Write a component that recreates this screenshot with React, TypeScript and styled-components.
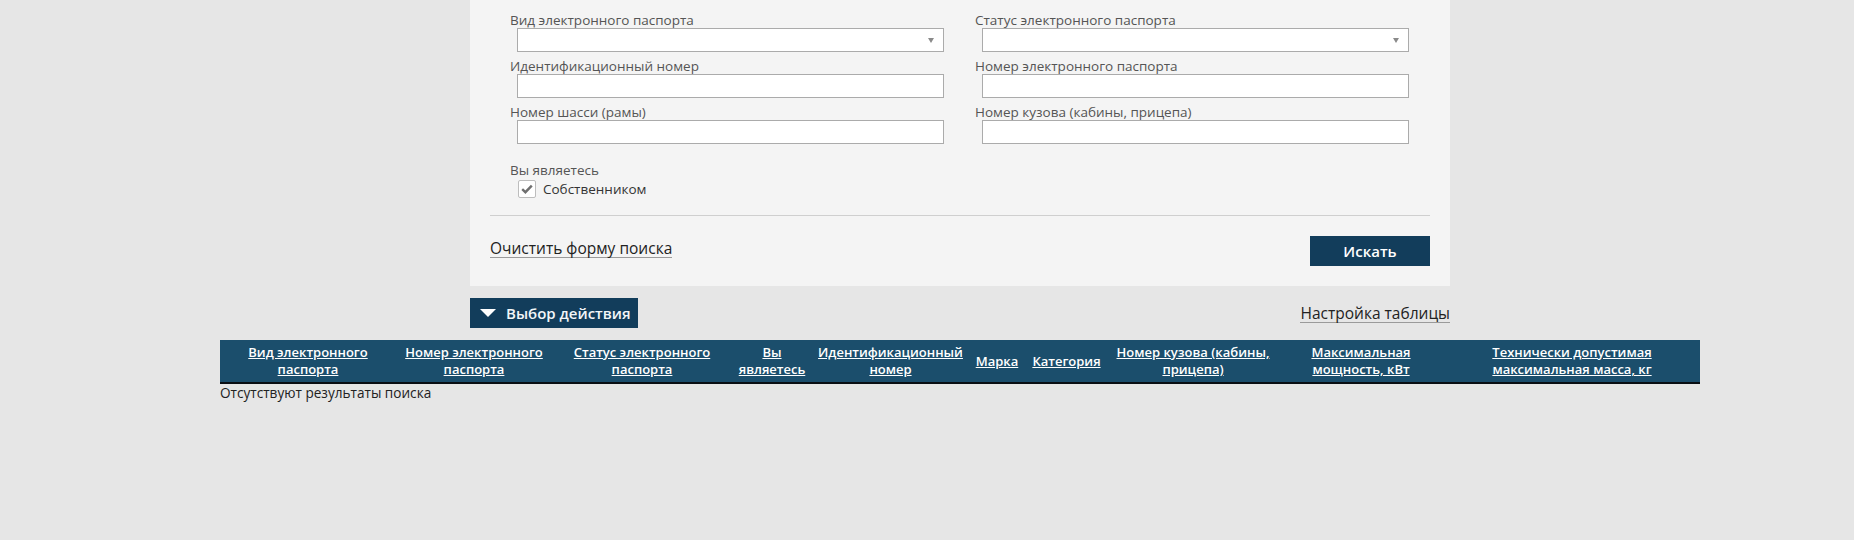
import * as React from "react";
import styled, { createGlobalStyle } from "styled-components";

const GlobalStyle = createGlobalStyle`
  body {
    margin: 0;
    background: #e6e6e6;
    font-family: "Open Sans", "Noto Sans", sans-serif;
  }
`;

const Page = styled.div`
  width: 1480px;
  margin-left: 220px;
`;

const SearchPanel = styled.div`
  width: 980px;
  margin: 0 auto;
  box-sizing: border-box;
  background: #f4f4f4;
  padding: 12px 20px 20px;
`;

const FieldGrid = styled.div`
  display: grid;
  grid-template-columns: 465px 1fr;
  row-gap: 6px;
  padding-left: 20px;
`;

const Field = styled.div`
  display: flex;
  flex-direction: column;
`;

const Label = styled.div`
  font-size: 13.5px;
  line-height: 16px;
  color: #555;
`;

const InputBox = styled.div`
  position: relative;
  width: 427px;
  height: 24px;
  margin-left: 7px;
  box-sizing: border-box;
  border: 1px solid #ababab;
  background: #fff;
`;

const SelectArrow = styled.span`
  position: absolute;
  right: 9px;
  top: 9px;
  width: 0;
  height: 0;
  border-left: 3px solid transparent;
  border-right: 3px solid transparent;
  border-top: 5px solid #8a8a8a;
`;

const OwnerBlock = styled.div`
  padding: 18px 0 0 20px;
`;

const CheckRow = styled.label`
  display: flex;
  align-items: center;
  gap: 7px;
  margin: 2px 0 0 8px;
  font-size: 13.5px;
  color: #333;
`;

const CheckBox = styled.span`
  width: 18px;
  height: 18px;
  box-sizing: border-box;
  border: 1px solid #bdbdbd;
  border-radius: 2px;
  background: #fff;
  display: flex;
  align-items: center;
  justify-content: center;
`;

const Divider = styled.div`
  height: 1px;
  background: #cfcfcf;
  margin-top: 17px;
`;

const FooterRow = styled.div`
  display: flex;
  justify-content: space-between;
  align-items: flex-start;
  margin-top: 20px;
`;

const TextLink = styled.a<{ $offset?: number }>`
  margin-top: ${(p) => p.$offset ?? 0}px;
  font-size: 15.5px;
  line-height: 18px;
  color: #222;
  text-decoration: none;
  border-bottom: 1px solid #9a9a9a;
  cursor: pointer;
`;

const PrimaryButton = styled.button`
  width: 120px;
  height: 30px;
  border: none;
  background: #123d5b;
  color: #fff;
  font-family: inherit;
  font-size: 15px;
  font-weight: 600;
  cursor: pointer;
`;

const Toolbar = styled.div`
  width: 980px;
  margin: 12px auto 0;
  display: flex;
  justify-content: space-between;
  align-items: center;
`;

const ActionButton = styled.button`
  display: flex;
  align-items: center;
  gap: 10px;
  height: 30px;
  width: 168px;
  padding: 0 0 0 10px;
  border: none;
  background: #123d5b;
  color: #f2f6f8;
  font-family: inherit;
  font-size: 15px;
  font-weight: 600;
  cursor: pointer;
`;

const Triangle = styled.span`
  width: 0;
  height: 0;
  border-left: 8px solid transparent;
  border-right: 8px solid transparent;
  border-top: 8px solid #fff;
`;

const ResultTable = styled.table`
  width: 1480px;
  margin-top: 12px;
  border-collapse: collapse;
  table-layout: fixed;
`;

const HeadCell = styled.th<{ $w: number }>`
  width: ${(p) => p.$w}px;
  background: #1b4e6c;
  border-bottom: 2px solid #0a0f14;
  padding: 4px 5px;
  height: 43px;
  box-sizing: border-box;
  color: #fff;
  font-size: 13px;
  font-weight: 600;
  line-height: 17px;
  text-align: center;
  vertical-align: middle;

  a {
    color: #fff;
    text-decoration: underline;
  }
`;

const EmptyText = styled.div`
  font-size: 13.6px;
  line-height: 18px;
  color: #222;
`;

const columns: { title: string; w: number }[] = [
  { title: "Вид электронного паспорта", w: 176 },
  { title: "Номер электронного паспорта", w: 156 },
  { title: "Статус электронного паспорта", w: 180 },
  { title: "Вы являетесь", w: 80 },
  { title: "Идентификационный номер", w: 157 },
  { title: "Марка", w: 56 },
  { title: "Категория", w: 83 },
  { title: "Номер кузова (кабины, прицепа)", w: 170 },
  { title: "Максимальная мощность, кВт", w: 166 },
  { title: "Технически допустимая максимальная масса, кг", w: 256 },
];

const fields: { label: string; select?: boolean }[] = [
  { label: "Вид электронного паспорта", select: true },
  { label: "Статус электронного паспорта", select: true },
  { label: "Идентификационный номер" },
  { label: "Номер электронного паспорта" },
  { label: "Номер шасси (рамы)" },
  { label: "Номер кузова (кабины, прицепа)" },
];

const App: React.FC = () => {
  return (
    <>
      <GlobalStyle />
      <Page>
        <SearchPanel>
          <FieldGrid>
            {fields.map((f) => (
              <Field key={f.label}>
                <Label>{f.label}</Label>
                <InputBox>{f.select && <SelectArrow />}</InputBox>
              </Field>
            ))}
          </FieldGrid>

          <OwnerBlock>
            <Label>Вы являетесь</Label>
            <CheckRow>
              <CheckBox>
                <svg width="12" height="10" viewBox="0 0 12 10">
                  <path
                    d="M1.2 5.2 L4.4 8.2 L10.8 1.6"
                    fill="none"
                    stroke="#6f6f6f"
                    strokeWidth="2.4"
                  />
                </svg>
              </CheckBox>
              Собственником
            </CheckRow>
          </OwnerBlock>

          <Divider />

          <FooterRow>
            <TextLink $offset={3}>Очистить форму поиска</TextLink>
            <PrimaryButton>Искать</PrimaryButton>
          </FooterRow>
        </SearchPanel>

        <Toolbar>
          <ActionButton>
            <Triangle />
            Выбор действия
          </ActionButton>
          <TextLink>Настройка таблицы</TextLink>
        </Toolbar>

        <ResultTable>
          <thead>
            <tr>
              {columns.map((c) => (
                <HeadCell key={c.title} $w={c.w}>
                  <a>{c.title}</a>
                </HeadCell>
              ))}
            </tr>
          </thead>
        </ResultTable>
        <EmptyText>Отсутствуют результаты поиска</EmptyText>
      </Page>
    </>
  );
};

export default App;
